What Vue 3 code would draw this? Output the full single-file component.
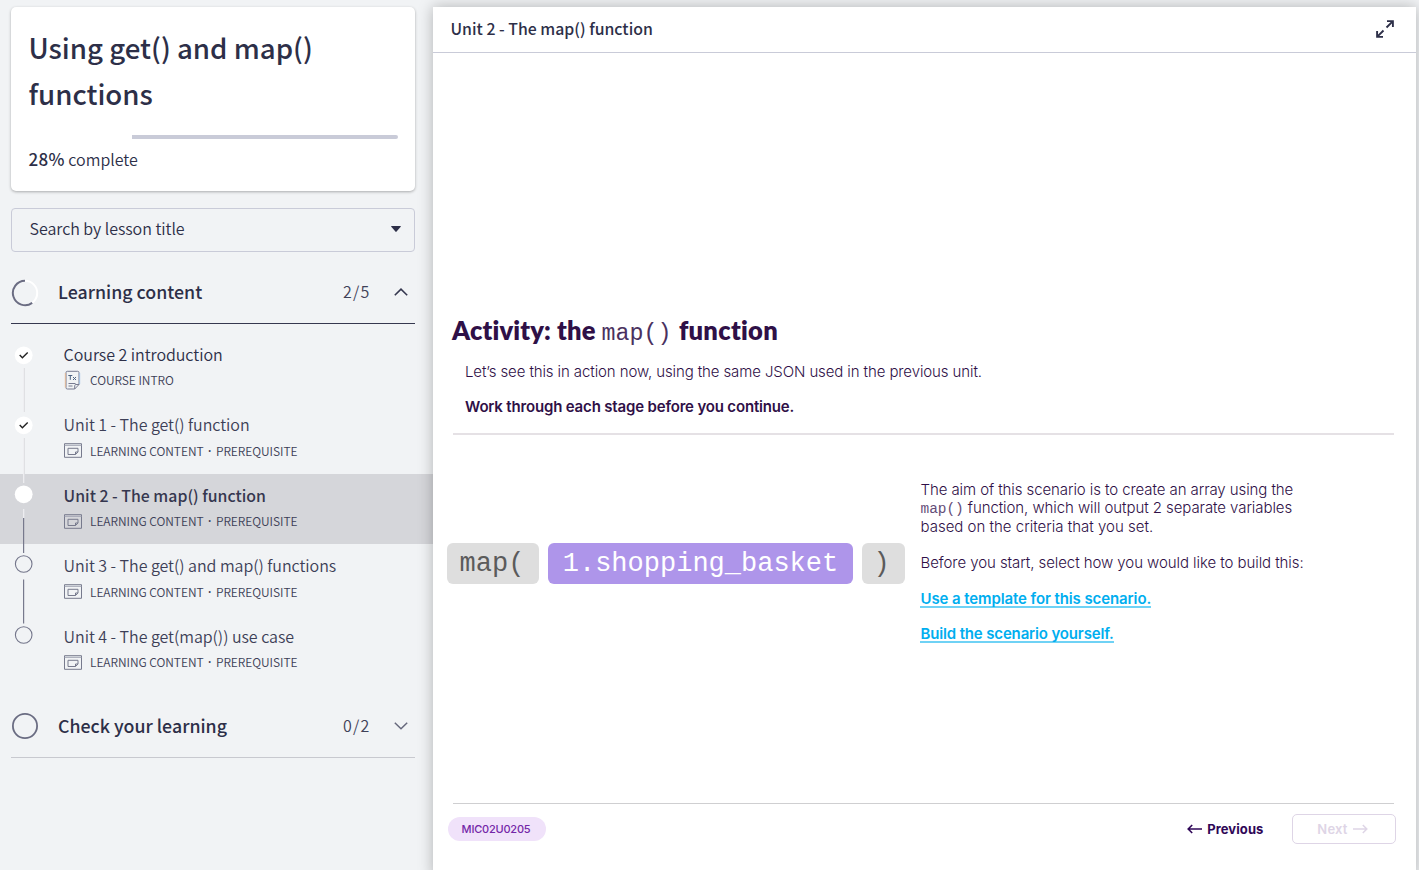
<script setup>
const lessons = [
  { title: 'Course 2 introduction', meta: ['COURSE INTRO'], state: 'done', icon: 'text', cy: 22, light: [35, 79], cls: 'l1' },
  { title: 'Unit 1 - The get() function', meta: ['LEARNING CONTENT', 'PREREQUISITE'], state: 'done', cy: 22, light: [35, 80], cls: 'l2' },
  { title: 'Unit 2 - The map() function', meta: ['LEARNING CONTENT', 'PREREQUISITE'], state: 'current', cy: 20, light: [35, 44], dark: [44, 79], cls: 'l3' },
  { title: 'Unit 3 - The get() and map() functions', meta: ['LEARNING CONTENT', 'PREREQUISITE'], state: 'todo', cy: 20, dark: [35.5, 79.5], cls: 'l4' },
  { title: 'Unit 4 - The get(map()) use case', meta: ['LEARNING CONTENT', 'PREREQUISITE'], state: 'todo', cy: 20, cls: 'l5' },
]
</script>

<template>
  <div class="page">
    <aside class="sidebar">
      <section class="card">
        <h1><span>Using get() and map()</span><br /><span>functions</span></h1>
        <div class="track"><div class="rest"></div></div>
        <p class="complete"><b>28%</b> complete</p>
      </section>

      <div class="search">
        <span>Search by lesson title</span>
        <svg width="10" height="6" viewBox="0 0 10 6"><path d="M.6 0h8.8q.8 0 .3.7L5.6 5.6q-.6.6-1.2 0L.3.7Q-.2 0 .6 0z" fill="#2d2f48" /></svg>
      </div>

      <header class="group expanded">
        <svg class="ring" width="28" height="28" viewBox="0 0 28 28" fill="none" stroke-width="2">
          <circle cx="14" cy="14" r="12.2" stroke="#fff" />
          <path d="M14 1.8A12.2 12.2 0 1 0 21.2 23.9" stroke="#6a6c82" />
        </svg>
        <h2>Learning content</h2>
        <span class="count">2/5</span>
        <svg class="chev" width="14" height="8" viewBox="0 0 14 8"><path d="M.8 7.2 7 1.2l6.2 6" fill="none" stroke="#35374f" stroke-width="1.6" /></svg>
      </header>

      <ul class="lessons">
        <li v-for="l in lessons" :key="l.title" :class="[l.cls, l.state]">
          <svg class="rail" width="20" height="70" viewBox="0 0 20 70">
            <path v-if="l.light" :d="`M10 ${l.light[0]}V${l.light[1]}`" stroke="#dcdde1" stroke-width="1.8" />
            <path v-if="l.light" :d="`M9.6 ${l.light[0]}V${l.light[1]}`" stroke="#f8f8f9" stroke-width=".7" />
            <path v-if="l.dark" :d="`M9.6 ${l.dark[0]}V${l.dark[1]}`" stroke="#77798c" stroke-width="1.2" />
            <circle v-if="l.state === 'todo'" cx="9.7" :cy="l.cy" r="8.3" fill="none" stroke="#73758a" stroke-width="1.1" />
            <circle v-else cx="9.7" :cy="l.cy + .3" r="8.9" fill="#fff" />
            <path v-if="l.state === 'done'" d="m5.7 22 2.7 2.7 5.3-5.2" fill="none" stroke="#222" stroke-width="1.4" />
          </svg>
          <div class="info">
            <div class="title"><span>{{ l.title }}</span></div>
            <div class="meta">
              <svg v-if="l.icon" width="18" height="20" viewBox="0 -1 18 20" fill="none" stroke="#777b91">
                <path d="M3.300.3h10.400q1.300 0 1.300 1.300v11.900L10.700 18H3.300Q2 18 2 16.700V1.600Q2 .3 3.300.3z" />
                <path d="M15 13.500h-3.100q-1.200 0-1.200 1.200V18M4.500 12.500h7M4.500 15h4" />
                <path d="M4.300 4.500h4M6.300 4.500v4.300M9 6l3 3M12 6 9 9" stroke="#4d6382" />
                <path d="M1.300 2v14.500" stroke="#f0b98a" stroke-width=".8" /><path d="M15.700 2v11" stroke="#9cc4ec" stroke-width=".8" />
              </svg>
              <svg v-else width="18" height="15" viewBox="0 0 18 15" fill="none" stroke="#777a8d">
                <path d="M.5.7h17v13.600H.500z" /><path d="M.500 2.300h17" stroke="#a1a3b2" />
                <path d="M4 5.300h10v3.800l-2.500 2.400H4zM11.500 11.500V9H14" />
              </svg>
              <span>{{ l.meta[0] }}</span>
              <template v-if="l.meta[1]"><span class="dot">·</span><span>{{ l.meta[1] }}</span></template>
            </div>
          </div>
        </li>
      </ul>

      <header class="group closed">
        <svg class="ring" width="28" height="28" viewBox="0 0 28 28"><circle cx="14" cy="14" r="12.100" fill="none" stroke="#6a6c82" stroke-width="1.800" /></svg>
        <h2>Check your learning</h2>
        <span class="count">0/2</span>
        <svg class="chev" width="14" height="8" viewBox="0 0 14 8"><path d="m.8.8 6.200 6 6.200-6" fill="none" stroke="#66687c" stroke-width="1.500" /></svg>
      </header>
    </aside>

    <main class="main">
      <header class="bar">
        <span>Unit 2 - The map() function</span>
        <svg width="18" height="18" viewBox="0 0 18 18" fill="none" stroke="#2d2f48" stroke-width="1.900"><path d="M11 1.100h5.900V7M16.700 1.300l-6.200 6.200M7 16.900H1.100V11M1.300 16.700l6.200-6.200" /></svg>
      </header>
      <section class="activity">
        <h2><span class="ha">Activity: the</span><code>map()</code><span class="hb">function</span></h2>
        <p class="p1">Let’s see this in action now, using the same JSON used in the previous unit.</p>
        <p class="p2">Work through each stage before you continue.</p>
      </section>
      <section class="content">
        <div class="formula"><code class="gray">map(</code><code class="violet">1.shopping_basket</code><code class="gray end">)</code></div>
        <div class="copy">
          <p>The aim of this scenario is to create an array using the</p>
          <p class="c2"><code>map()</code><span> function, which will output 2 separate variables</span></p>
          <p class="c3">based on the criteria that you set.</p>
          <p class="c4">Before you start, select how you would like to build this:</p>
          <a class="a1">Use a template for this scenario.</a>
          <a>Build the scenario yourself.</a>
        </div>
      </section>
      <footer class="foot">
        <span class="tag">MIC02U0205</span>
        <div class="nav">
          <span class="prev"><svg width="15" height="10" viewBox="0 0 15 10"><path d="M15 5H1.200M5.200 1l-4 4 4 4" fill="none" stroke="#2f0757" stroke-width="1.600" /></svg><span>Previous</span></span>
          <button><span>Next</span><svg width="15" height="10" viewBox="0 0 15 10"><path d="M0 5h13.800M9.800 1l4 4-4 4" fill="none" stroke="#ded5e6" stroke-width="1.500" /></svg></button>
        </div>
      </footer>
    </main>
  </div>
</template>

<style>
body { background: #f1f3f5; overflow: hidden; }
</style>
<style scoped>
* { box-sizing: border-box; }
h1, h2, p, ul { margin: 0; padding: 0; }
span, code, a, p { white-space: pre; }
.page { display: flex; width: 1419px; height: 870px; overflow: hidden; background: #f1f3f5; font-family: "Noto Sans CJK SC", "Noto Sans", sans-serif; color: #2d2f48; }
.sidebar { width: 433px; flex: none; padding-top: 7px; }
.card { margin-left: 11px; width: 404px; height: 184px; background: #fff; border-radius: 5px; padding: 17px 17px 0; box-shadow: 0 1px 3px #0000004d; }
h1 { font-size: 27.650px; line-height: 46px; font-weight: 500; padding-left: .5px; }
.track { height: 4px; margin-top: 19px; display: flex; justify-content: flex-end; }
.rest { width: 266px; height: 4px; background: #c9cbd8; border-radius: 0 3px 3px 0; }
.complete { margin-top: 8px; padding-left: .5px; font-size: 16px; line-height: 24px; font-weight: 350; letter-spacing: 0; white-space: nowrap; }
.complete b { font-weight: 500; font-size: 17px; letter-spacing: .3px; }
.search { margin: 17px 0 0 11px; width: 404px; height: 44px; border: 1px solid #c9cbd8; border-radius: 4px; display: flex; align-items: center; justify-content: space-between; padding: 0 13px 2px 17.500px; font-size: 16px; font-weight: 350; letter-spacing: -.04px; }
.search span { position: relative; top: -1px; }
.group { display: flex; align-items: center; margin-left: 11px; width: 404px; height: 62px; border-bottom: 1px solid #36384f; }
.expanded { margin-top: 10px; }
.closed { margin-top: 10px; height: 63px; border-color: #c8c9cf; }
.ring { flex: none; }
.group h2 { font-size: 17.800px; line-height: 28px; height: 31px; font-weight: 500; margin-left: 19px; flex: 1; }
.closed h2, .closed .count { position: relative; top: .5px; }
.count { width: 27px; height: 27px; line-height: 24px; font-size: 16px; font-weight: 350; letter-spacing: 1.200px; color: #3f4158; }
.chev { margin: 0 7px 1px 24px; }
.closed .chev { margin-bottom: 0; }
.lessons { list-style: none; margin-top: 9px; }
li { height: 70.400px; display: flex; padding-left: 14px; }
li.current { background: #d5d6da; }
.rail { overflow: visible; flex: none; }
.info { margin-left: 29.600px; }
.title { height: 24px; margin-top: 9.300px; font-size: 16px; line-height: 24px; font-weight: 350; letter-spacing: -.040px; color: #3d3f57; }
li.l1 .title { color: #2d2f48; }
.l2 .title span { position: relative; top: -.5px; }
.current .title { font-weight: 500; font-size: 15.850px; letter-spacing: 0; color: #35374f; }
.current .title span { position: relative; top: .700px; }
.meta { height: 22px; margin-top: 3.200px; display: flex; align-items: center; font-size: 12px; line-height: 20px; font-weight: 350; letter-spacing: -.05px; color: #3d3f57; }
.meta svg { margin-right: 8.400px; }
.dot { font-family: "Noto Sans", sans-serif; font-weight: 600; width: 12.400px; text-align: center; position: relative; top: 1px; }
.main { width: 983px; height: 870px; margin-top: 7px; background: #fff; box-shadow: 0 0 14px #00000045; display: flex; flex-direction: column; flex: none; }
.bar { height: 46px; flex: none; border-bottom: 1px solid #c9cbd8; padding: 0 22px 1px 17.500px; display: flex; align-items: center; justify-content: space-between; font-size: 15.850px; font-weight: 500; }
.bar span { position: relative; top: -1px; }
.activity { margin: 262px 22px 0 20px; height: 120px; border-bottom: 2px solid #e5e1e5; color: #2f1047; font-family: Inter, sans-serif; }
.activity h2 { display: flex; align-items: baseline; height: 34px; line-height: 31px; font-family: Lato, sans-serif; font-weight: 800; font-size: 25.500px; margin-left: -1px; font-variant-ligatures: none; }
.ha { width: 144px; letter-spacing: .150px; }
.hb { letter-spacing: .300px; }
.activity h2 code { font: 300 23.300px/31px "Liberation Mono", monospace; margin: 0 7.500px 0 5.500px; color: #4a3160; }
.p1 { margin: 12px 0 0 12px; font-size: 15px; line-height: 22px; font-weight: 300; letter-spacing: -.105px; }
.p2 { margin: 13px 0 0 12px; font-size: 15px; line-height: 22px; font-weight: 600; letter-spacing: -.170px; }
.content { display: flex; align-items: flex-start; margin-left: 14px; height: 368px; color: #2f1047; font-family: Inter, sans-serif; }
.formula { display: flex; gap: 9px; margin-top: 108px; width: 473px; flex: none; }
.formula code { font: 27px/42px "Liberation Mono", monospace; height: 41px; border-radius: 6px; text-align: center; width: 305px; }
.formula .gray { width: 92px; background: #dedede; color: #5b5b5b; padding-right: 2px; }
.formula .end { width: 43px; padding-right: 4px; }
.formula .violet { background: #ae95ea; color: #fff; }
.copy { margin-top: 46px; font-size: 15px; line-height: 18.500px; font-weight: 300; letter-spacing: -.085px; display: flex; flex-direction: column; align-items: flex-start; padding-left: .5px; }
.copy p { height: 18.500px; }
.copy .c2 { line-height: 16.500px; letter-spacing: -.075px; }
.copy .c3 { letter-spacing: 0; }
.copy code { font: 14.500px/16px "Liberation Mono", monospace; color: #644d78; }
.copy .c4 { margin-top: 17px; letter-spacing: -.070px; }
.copy a { font-weight: 600; color: #00aeef; line-height: 17px; border-bottom: 2px solid #6fd2f5; height: 18.500px; margin: 16.500px 0 0 -1px; padding-left: 1px; letter-spacing: -.150px; }
.copy .a1 { margin-top: 17.500px; letter-spacing: -.100px; }
.foot { margin: 0 21px 0 15px; position: relative; height: 52px; display: flex; justify-content: space-between; align-items: center; font-family: Inter, sans-serif; }
.foot::before { content: ""; position: absolute; left: 5px; right: 1px; top: 0; height: 1px; background: #cfcfd1; }
.tag { width: 98px; height: 24px; border-radius: 12px; background: #f0e2fa; color: #7427a8; font-size: 11px; line-height: 24px; font-weight: 500; text-align: center; letter-spacing: -.200px; padding-right: 2px; }
.nav { display: flex; align-items: center; gap: 28px; }
.prev { display: flex; align-items: center; gap: 5px; font-size: 13px; font-weight: 700; color: #2f0757; letter-spacing: .1px; }
button { width: 104px; height: 30px; margin-right: -.500px; border: 1px solid #ded5e6; border-radius: 5px; background: #fff; display: flex; align-items: center; justify-content: center; gap: 5px; color: #ded5e6; font: 600 13px Inter, sans-serif; letter-spacing: .2px; padding: 0 9px 0 7px; }
</style>
